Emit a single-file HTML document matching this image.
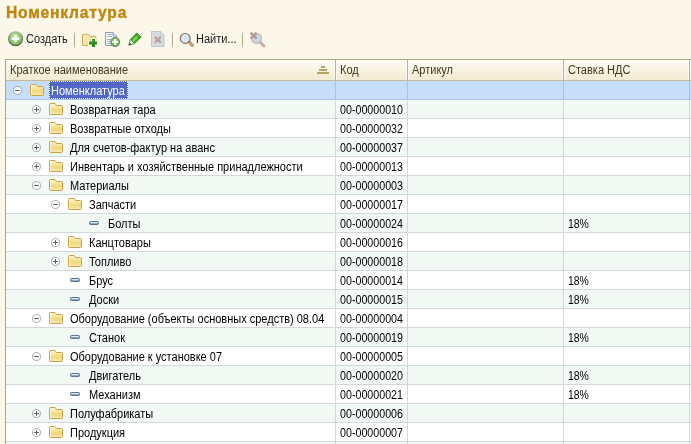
<!DOCTYPE html><html><head><meta charset="utf-8"><style>
*{margin:0;padding:0;box-sizing:border-box}
html,body{width:691px;height:444px;overflow:hidden;background:#fbf8ea;font-family:"Liberation Sans",sans-serif;font-size:11px;color:#000}
.a{position:absolute;white-space:nowrap}
.title{left:6px;top:3px;font-size:17px;font-weight:bold;color:#bf850e;-webkit-text-stroke:0.35px #bf850e;line-height:20px;letter-spacing:0.85px;transform:scaleX(0.92);transform-origin:0 0}
.tb{top:33px;line-height:12px;color:#1a1a1a;font-size:12px;transform:scaleX(0.9167);transform-origin:0 0}
.sep{position:absolute;top:30px;width:2px;height:20px;border-left:1px solid #aaa382;border-right:1px solid #fff;-webkit-mask:linear-gradient(transparent,#000 30%,#000 70%,transparent)}
.grid{left:5px;top:59px;width:700px;height:400px;background:#fff;border-left:1px solid #aca684;border-top:1px solid #aca684}
.hdr{left:6px;top:60px;width:700px;height:21px;background:linear-gradient(#fdfcf5,#f3ead0);border-bottom:1px solid #c4ba94}
.ht{top:64px;line-height:12px;color:#43381f;font-size:12px;transform:scaleX(0.9167);transform-origin:0 0}
.hcol{position:absolute;top:60px;width:1px;height:20px;background:#bbb18c;box-shadow:-1px 0 rgba(255,255,255,.6),1px 0 rgba(255,255,255,.6)}
.row{position:absolute;left:6px;width:700px;height:19px;border-bottom:1px solid #d0d7dd}
.odd{background:#f2f8f4}
.even{background:#fff}
.selr{background:#c6defa;border-bottom-color:#a9c5ea}
.vcol{position:absolute;width:1px;top:81px;height:380px;background:#d0d7dd}
.vsel{position:absolute;width:1px;top:81px;height:18px;background:#a9c3e6}
.t{line-height:12px;font-size:12px;transform:scaleX(0.9167);transform-origin:0 0}
</style></head><body>
<svg width="0" height="0" style="position:absolute"><defs><linearGradient id="fg" x1="0" y1="0" x2="0" y2="1"><stop offset="0" stop-color="#fff8dc"/><stop offset="0.3" stop-color="#f8e7a6"/><stop offset="0.62" stop-color="#f0d877"/><stop offset="0.85" stop-color="#f5e3a2"/><stop offset="1" stop-color="#f9ecc4"/></linearGradient></defs></svg>
<div class="a title">Номенклатура</div>
<svg class="a" style="left:7px;top:30px" width="17" height="17" viewBox="0 0 17 17"><defs><radialGradient id="gc" cx="0.45" cy="0.35" r="0.7"><stop offset="0" stop-color="#c4e8aa"/><stop offset="0.7" stop-color="#7fc05a"/><stop offset="1" stop-color="#5fa03c"/></radialGradient><linearGradient id="gr" x1="0" y1="0" x2="0" y2="1"><stop offset="0" stop-color="#a9b5a5"/><stop offset="1" stop-color="#4a5548"/></linearGradient></defs><circle cx="8.6" cy="8.7" r="7" fill="url(#gc)" stroke="url(#gr)" stroke-width="1.1"/><path d="M8.6 4.8V12.6M4.7 8.7H12.5" stroke="#fff" stroke-width="2.5"/></svg>
<div class="a tb" style="left:26px">Создать</div>
<div class="sep" style="left:74px"></div>
<div class="sep" style="left:172px"></div>
<div class="sep" style="left:242px"></div>
<svg class="a" style="left:81px;top:33px" width="17" height="15" viewBox="0 0 17 15"><defs><linearGradient id="ff" x1="0" y1="0" x2="1" y2="1"><stop offset="0" stop-color="#fbf1c8"/><stop offset="1" stop-color="#eed27e"/></linearGradient></defs><path d="M1.5 2Q1.5 1.3 2.2 1.3H7.5L9 3.3H14Q14.8 3.3 14.8 4.1V12.6H2.2Q1.5 12.6 1.5 11.9Z" fill="url(#ff)" stroke="#cfa852" stroke-width="1"/><path d="M10 5H15V8H17V13H15V15H10V13H7V8H10Z" fill="#fff" opacity="0.75"/><rect x="11" y="6" width="3" height="8" fill="#2a8a1a"/><rect x="8" y="8.5" width="8" height="3" fill="#2a8a1a"/><rect x="11.5" y="6.5" width="1" height="3" fill="#5cc04a"/></svg>
<svg class="a" style="left:104px;top:31px" width="17" height="16" viewBox="0 0 17 16"><path d="M1.5 1.5H9L12.5 5V14.5H1.5Z" fill="#f5f8fb" stroke="#86a0bb"/><path d="M9 1.5V5H12.5" fill="#d9e4ef" stroke="#86a0bb"/><path d="M3 3.5H7.5M3 5.5H8M3 8.5H8M3 10.5H7M3 12.5H7" stroke="#a4b3c5"/><circle cx="11.2" cy="11" r="4.5" fill="#6fb54c" stroke="#7f8c7c" stroke-width="1.1"/><circle cx="11.2" cy="10.2" r="2.6" fill="#a4d88a" opacity="0.6"/><path d="M11.2 8V14M8.2 11H14.2" stroke="#fff" stroke-width="2.2"/></svg>
<svg class="a" style="left:128px;top:32px" width="14" height="14" viewBox="0 0 14 14"><path d="M8.9 0.9L13.1 5.1L6.6 11.6L2.4 7.4Z" fill="#4cb02c" stroke="#247a12" stroke-width="0.8"/><path d="M10.6 3.4L4 10" stroke="#9be67a" stroke-width="1.3"/><path d="M7.6 2.2L11.8 6.4" stroke="#2a7c16" stroke-width="1"/><path d="M2.4 7.4L6.6 11.6L0.8 13.2Z" fill="#f4f8ee" stroke="#247a12" stroke-width="0.7"/><path d="M1.6 10.4L3.6 12.4L0.8 13.2Z" fill="#1c5c0c"/></svg>
<svg class="a" style="left:150px;top:30px" width="16" height="18" viewBox="0 0 16 18"><path d="M1.5 1.5H10.5L14 5V16.5H1.5Z" fill="#d9dde2" stroke="#bcc6d0"/><path d="M10.5 1.5V5H14" fill="#e6eaef" stroke="#bcc6d0"/><path d="M4.8 6.8L10.8 12.8M10.8 6.8L4.8 12.8" stroke="#bf9c95" stroke-width="2.3"/></svg>
<svg class="a" style="left:178px;top:31px" width="17" height="17" viewBox="0 0 17 17"><path d="M11.3 11.3L14.3 14.3" stroke="#957459" stroke-width="3" stroke-linecap="round"/><path d="M11.3 11.3L14.3 14.3" stroke="#d6b596" stroke-width="1.4" stroke-linecap="round"/><circle cx="7.2" cy="7.4" r="4.9" fill="#dbe6f7" stroke="#8f6f58" stroke-width="1.2"/></svg>
<div class="a tb" style="left:196px">Найти...</div>
<svg class="a" style="left:248px;top:30px" width="18" height="18" viewBox="0 0 18 18"><path d="M12.2 12.2L16 16" stroke="#c2b3a8" stroke-width="3" stroke-linecap="round"/><circle cx="8.6" cy="8.5" r="4.9" fill="#c9d8e6" stroke="#c8b8aa" stroke-width="1.2"/><path d="M2.6 2.6L8.6 8.6M8.6 2.6L2.6 8.6" stroke="#b39a96" stroke-width="2.4"/></svg>
<div class="a grid"></div>
<div class="a hdr"></div>
<div class="hcol" style="left:335px"></div>
<div class="hcol" style="left:407px"></div>
<div class="hcol" style="left:563px"></div>
<div class="hcol" style="left:689px"></div>
<div class="a ht" style="left:10px">Краткое наименование</div>
<div class="a ht" style="left:340px">Код</div>
<div class="a ht" style="left:412px">Артикул</div>
<div class="a ht" style="left:568px">Ставка НДС</div>
<svg class="a" style="left:317px;top:66px" width="12" height="8" viewBox="0 0 12 8"><path d="M4 1H8M2 4H10M0 7H12" stroke="#b3a264" stroke-width="2"/></svg>
<div class="row selr" style="top:81px;height:19px"></div>
<div class="row odd" style="top:100px;height:19px"></div>
<div class="row even" style="top:119px;height:19px"></div>
<div class="row odd" style="top:138px;height:19px"></div>
<div class="row even" style="top:157px;height:19px"></div>
<div class="row odd" style="top:176px;height:19px"></div>
<div class="row even" style="top:195px;height:19px"></div>
<div class="row odd" style="top:214px;height:19px"></div>
<div class="row even" style="top:233px;height:19px"></div>
<div class="row odd" style="top:252px;height:19px"></div>
<div class="row even" style="top:271px;height:19px"></div>
<div class="row odd" style="top:290px;height:19px"></div>
<div class="row even" style="top:309px;height:19px"></div>
<div class="row odd" style="top:328px;height:19px"></div>
<div class="row even" style="top:347px;height:19px"></div>
<div class="row odd" style="top:366px;height:19px"></div>
<div class="row even" style="top:385px;height:19px"></div>
<div class="row odd" style="top:404px;height:19px"></div>
<div class="row even" style="top:423px;height:19px"></div>
<div class="row odd" style="top:442px;height:19px"></div>
<div class="vcol" style="left:335px"></div>
<div class="vsel" style="left:335px"></div>
<div class="vcol" style="left:407px"></div>
<div class="vsel" style="left:407px"></div>
<div class="vcol" style="left:563px"></div>
<div class="vsel" style="left:563px"></div>
<div class="vcol" style="left:689px"></div>
<div class="vsel" style="left:689px"></div>
<svg class="a" style="left:13px;top:86px" width="9" height="9" viewBox="0 0 9 9"><circle cx="4.5" cy="4.5" r="4" fill="#fff" stroke="rgba(70,80,95,0.42)" stroke-width="1.1"/><path d="M2.2 4.5 H6.8" stroke="#5a5a5a" stroke-width="1"/></svg>
<svg class="a" style="left:30px;top:84px" width="14" height="12" viewBox="0 0 14 12"><path d="M0.5 1.5 Q0.5 0.5 1.5 0.5 H6 L7.5 2.5 H12.5 Q13.5 2.5 13.5 3.5 V10.5 Q13.5 11.5 12.5 11.5 H1.5 Q0.5 11.5 0.5 10.5 Z" fill="url(#fg)" stroke="#c9a043" stroke-width="1"/><path d="M1.5 1.5V10.5" stroke="#fffbea" stroke-width="1" opacity="0.8"/></svg>
<div class="a" style="left:49px;top:81px;width:79px;height:18px;background:#5367c7;outline:1px dotted #fff;outline-offset:-1px"></div>
<div class="a t" style="left:51px;top:85px;color:#fff">Номенклатура</div>
<svg class="a" style="left:32px;top:105px" width="9" height="9" viewBox="0 0 9 9"><circle cx="4.5" cy="4.5" r="4" fill="#fff" stroke="rgba(70,80,95,0.42)" stroke-width="1.1"/><path d="M2.2 4.5 H6.8" stroke="#5a5a5a" stroke-width="1"/><path d="M4.5 2.2 V6.8" stroke="#5a5a5a" stroke-width="1"/></svg>
<svg class="a" style="left:49px;top:103px" width="14" height="12" viewBox="0 0 14 12"><path d="M0.5 1.5 Q0.5 0.5 1.5 0.5 H6 L7.5 2.5 H12.5 Q13.5 2.5 13.5 3.5 V10.5 Q13.5 11.5 12.5 11.5 H1.5 Q0.5 11.5 0.5 10.5 Z" fill="url(#fg)" stroke="#c9a043" stroke-width="1"/><path d="M1.5 1.5V10.5" stroke="#fffbea" stroke-width="1" opacity="0.8"/></svg>
<div class="a t" style="left:70px;top:104px">Возвратная тара</div>
<div class="a t" style="left:340px;top:104px;transform:scaleX(0.89)">00-00000010</div>
<svg class="a" style="left:32px;top:124px" width="9" height="9" viewBox="0 0 9 9"><circle cx="4.5" cy="4.5" r="4" fill="#fff" stroke="rgba(70,80,95,0.42)" stroke-width="1.1"/><path d="M2.2 4.5 H6.8" stroke="#5a5a5a" stroke-width="1"/><path d="M4.5 2.2 V6.8" stroke="#5a5a5a" stroke-width="1"/></svg>
<svg class="a" style="left:49px;top:122px" width="14" height="12" viewBox="0 0 14 12"><path d="M0.5 1.5 Q0.5 0.5 1.5 0.5 H6 L7.5 2.5 H12.5 Q13.5 2.5 13.5 3.5 V10.5 Q13.5 11.5 12.5 11.5 H1.5 Q0.5 11.5 0.5 10.5 Z" fill="url(#fg)" stroke="#c9a043" stroke-width="1"/><path d="M1.5 1.5V10.5" stroke="#fffbea" stroke-width="1" opacity="0.8"/></svg>
<div class="a t" style="left:70px;top:123px">Возвратные отходы</div>
<div class="a t" style="left:340px;top:123px;transform:scaleX(0.89)">00-00000032</div>
<svg class="a" style="left:32px;top:143px" width="9" height="9" viewBox="0 0 9 9"><circle cx="4.5" cy="4.5" r="4" fill="#fff" stroke="rgba(70,80,95,0.42)" stroke-width="1.1"/><path d="M2.2 4.5 H6.8" stroke="#5a5a5a" stroke-width="1"/><path d="M4.5 2.2 V6.8" stroke="#5a5a5a" stroke-width="1"/></svg>
<svg class="a" style="left:49px;top:141px" width="14" height="12" viewBox="0 0 14 12"><path d="M0.5 1.5 Q0.5 0.5 1.5 0.5 H6 L7.5 2.5 H12.5 Q13.5 2.5 13.5 3.5 V10.5 Q13.5 11.5 12.5 11.5 H1.5 Q0.5 11.5 0.5 10.5 Z" fill="url(#fg)" stroke="#c9a043" stroke-width="1"/><path d="M1.5 1.5V10.5" stroke="#fffbea" stroke-width="1" opacity="0.8"/></svg>
<div class="a t" style="left:70px;top:142px">Для счетов-фактур на аванс</div>
<div class="a t" style="left:340px;top:142px;transform:scaleX(0.89)">00-00000037</div>
<svg class="a" style="left:32px;top:162px" width="9" height="9" viewBox="0 0 9 9"><circle cx="4.5" cy="4.5" r="4" fill="#fff" stroke="rgba(70,80,95,0.42)" stroke-width="1.1"/><path d="M2.2 4.5 H6.8" stroke="#5a5a5a" stroke-width="1"/><path d="M4.5 2.2 V6.8" stroke="#5a5a5a" stroke-width="1"/></svg>
<svg class="a" style="left:49px;top:160px" width="14" height="12" viewBox="0 0 14 12"><path d="M0.5 1.5 Q0.5 0.5 1.5 0.5 H6 L7.5 2.5 H12.5 Q13.5 2.5 13.5 3.5 V10.5 Q13.5 11.5 12.5 11.5 H1.5 Q0.5 11.5 0.5 10.5 Z" fill="url(#fg)" stroke="#c9a043" stroke-width="1"/><path d="M1.5 1.5V10.5" stroke="#fffbea" stroke-width="1" opacity="0.8"/></svg>
<div class="a t" style="left:70px;top:161px">Инвентарь и хозяйственные принадлежности</div>
<div class="a t" style="left:340px;top:161px;transform:scaleX(0.89)">00-00000013</div>
<svg class="a" style="left:32px;top:181px" width="9" height="9" viewBox="0 0 9 9"><circle cx="4.5" cy="4.5" r="4" fill="#fff" stroke="rgba(70,80,95,0.42)" stroke-width="1.1"/><path d="M2.2 4.5 H6.8" stroke="#5a5a5a" stroke-width="1"/></svg>
<svg class="a" style="left:49px;top:179px" width="14" height="12" viewBox="0 0 14 12"><path d="M0.5 1.5 Q0.5 0.5 1.5 0.5 H6 L7.5 2.5 H12.5 Q13.5 2.5 13.5 3.5 V10.5 Q13.5 11.5 12.5 11.5 H1.5 Q0.5 11.5 0.5 10.5 Z" fill="url(#fg)" stroke="#c9a043" stroke-width="1"/><path d="M1.5 1.5V10.5" stroke="#fffbea" stroke-width="1" opacity="0.8"/></svg>
<div class="a t" style="left:70px;top:180px">Материалы</div>
<div class="a t" style="left:340px;top:180px;transform:scaleX(0.89)">00-00000003</div>
<svg class="a" style="left:51px;top:200px" width="9" height="9" viewBox="0 0 9 9"><circle cx="4.5" cy="4.5" r="4" fill="#fff" stroke="rgba(70,80,95,0.42)" stroke-width="1.1"/><path d="M2.2 4.5 H6.8" stroke="#5a5a5a" stroke-width="1"/></svg>
<svg class="a" style="left:68px;top:198px" width="14" height="12" viewBox="0 0 14 12"><path d="M0.5 1.5 Q0.5 0.5 1.5 0.5 H6 L7.5 2.5 H12.5 Q13.5 2.5 13.5 3.5 V10.5 Q13.5 11.5 12.5 11.5 H1.5 Q0.5 11.5 0.5 10.5 Z" fill="url(#fg)" stroke="#c9a043" stroke-width="1"/><path d="M1.5 1.5V10.5" stroke="#fffbea" stroke-width="1" opacity="0.8"/></svg>
<div class="a t" style="left:89px;top:199px">Запчасти</div>
<div class="a t" style="left:340px;top:199px;transform:scaleX(0.89)">00-00000017</div>
<svg class="a" style="left:89px;top:221px" width="10" height="4" viewBox="0 0 10 4"><rect x="0" y="0" width="10" height="4" rx="2" fill="#56728f"/><rect x="1" y="1" width="8" height="1.6" rx="0.8" fill="#dce8f4"/><rect x="1.5" y="2.3" width="7" height="0.7" fill="#8ea6be"/></svg>
<div class="a t" style="left:108px;top:218px">Болты</div>
<div class="a t" style="left:340px;top:218px;transform:scaleX(0.89)">00-00000024</div>
<div class="a t" style="left:568px;top:218px;transform:scaleX(0.87)">18%</div>
<svg class="a" style="left:51px;top:238px" width="9" height="9" viewBox="0 0 9 9"><circle cx="4.5" cy="4.5" r="4" fill="#fff" stroke="rgba(70,80,95,0.42)" stroke-width="1.1"/><path d="M2.2 4.5 H6.8" stroke="#5a5a5a" stroke-width="1"/><path d="M4.5 2.2 V6.8" stroke="#5a5a5a" stroke-width="1"/></svg>
<svg class="a" style="left:68px;top:236px" width="14" height="12" viewBox="0 0 14 12"><path d="M0.5 1.5 Q0.5 0.5 1.5 0.5 H6 L7.5 2.5 H12.5 Q13.5 2.5 13.5 3.5 V10.5 Q13.5 11.5 12.5 11.5 H1.5 Q0.5 11.5 0.5 10.5 Z" fill="url(#fg)" stroke="#c9a043" stroke-width="1"/><path d="M1.5 1.5V10.5" stroke="#fffbea" stroke-width="1" opacity="0.8"/></svg>
<div class="a t" style="left:89px;top:237px">Канцтовары</div>
<div class="a t" style="left:340px;top:237px;transform:scaleX(0.89)">00-00000016</div>
<svg class="a" style="left:51px;top:257px" width="9" height="9" viewBox="0 0 9 9"><circle cx="4.5" cy="4.5" r="4" fill="#fff" stroke="rgba(70,80,95,0.42)" stroke-width="1.1"/><path d="M2.2 4.5 H6.8" stroke="#5a5a5a" stroke-width="1"/><path d="M4.5 2.2 V6.8" stroke="#5a5a5a" stroke-width="1"/></svg>
<svg class="a" style="left:68px;top:255px" width="14" height="12" viewBox="0 0 14 12"><path d="M0.5 1.5 Q0.5 0.5 1.5 0.5 H6 L7.5 2.5 H12.5 Q13.5 2.5 13.5 3.5 V10.5 Q13.5 11.5 12.5 11.5 H1.5 Q0.5 11.5 0.5 10.5 Z" fill="url(#fg)" stroke="#c9a043" stroke-width="1"/><path d="M1.5 1.5V10.5" stroke="#fffbea" stroke-width="1" opacity="0.8"/></svg>
<div class="a t" style="left:89px;top:256px">Топливо</div>
<div class="a t" style="left:340px;top:256px;transform:scaleX(0.89)">00-00000018</div>
<svg class="a" style="left:70px;top:278px" width="10" height="4" viewBox="0 0 10 4"><rect x="0" y="0" width="10" height="4" rx="2" fill="#56728f"/><rect x="1" y="1" width="8" height="1.6" rx="0.8" fill="#dce8f4"/><rect x="1.5" y="2.3" width="7" height="0.7" fill="#8ea6be"/></svg>
<div class="a t" style="left:89px;top:275px">Брус</div>
<div class="a t" style="left:340px;top:275px;transform:scaleX(0.89)">00-00000014</div>
<div class="a t" style="left:568px;top:275px;transform:scaleX(0.87)">18%</div>
<svg class="a" style="left:70px;top:297px" width="10" height="4" viewBox="0 0 10 4"><rect x="0" y="0" width="10" height="4" rx="2" fill="#56728f"/><rect x="1" y="1" width="8" height="1.6" rx="0.8" fill="#dce8f4"/><rect x="1.5" y="2.3" width="7" height="0.7" fill="#8ea6be"/></svg>
<div class="a t" style="left:89px;top:294px">Доски</div>
<div class="a t" style="left:340px;top:294px;transform:scaleX(0.89)">00-00000015</div>
<div class="a t" style="left:568px;top:294px;transform:scaleX(0.87)">18%</div>
<svg class="a" style="left:32px;top:314px" width="9" height="9" viewBox="0 0 9 9"><circle cx="4.5" cy="4.5" r="4" fill="#fff" stroke="rgba(70,80,95,0.42)" stroke-width="1.1"/><path d="M2.2 4.5 H6.8" stroke="#5a5a5a" stroke-width="1"/></svg>
<svg class="a" style="left:49px;top:312px" width="14" height="12" viewBox="0 0 14 12"><path d="M0.5 1.5 Q0.5 0.5 1.5 0.5 H6 L7.5 2.5 H12.5 Q13.5 2.5 13.5 3.5 V10.5 Q13.5 11.5 12.5 11.5 H1.5 Q0.5 11.5 0.5 10.5 Z" fill="url(#fg)" stroke="#c9a043" stroke-width="1"/><path d="M1.5 1.5V10.5" stroke="#fffbea" stroke-width="1" opacity="0.8"/></svg>
<div class="a t" style="left:70px;top:313px">Оборудование (объекты основных средств) 08.04</div>
<div class="a t" style="left:340px;top:313px;transform:scaleX(0.89)">00-00000004</div>
<svg class="a" style="left:70px;top:335px" width="10" height="4" viewBox="0 0 10 4"><rect x="0" y="0" width="10" height="4" rx="2" fill="#56728f"/><rect x="1" y="1" width="8" height="1.6" rx="0.8" fill="#dce8f4"/><rect x="1.5" y="2.3" width="7" height="0.7" fill="#8ea6be"/></svg>
<div class="a t" style="left:89px;top:332px">Станок</div>
<div class="a t" style="left:340px;top:332px;transform:scaleX(0.89)">00-00000019</div>
<div class="a t" style="left:568px;top:332px;transform:scaleX(0.87)">18%</div>
<svg class="a" style="left:32px;top:352px" width="9" height="9" viewBox="0 0 9 9"><circle cx="4.5" cy="4.5" r="4" fill="#fff" stroke="rgba(70,80,95,0.42)" stroke-width="1.1"/><path d="M2.2 4.5 H6.8" stroke="#5a5a5a" stroke-width="1"/></svg>
<svg class="a" style="left:49px;top:350px" width="14" height="12" viewBox="0 0 14 12"><path d="M0.5 1.5 Q0.5 0.5 1.5 0.5 H6 L7.5 2.5 H12.5 Q13.5 2.5 13.5 3.5 V10.5 Q13.5 11.5 12.5 11.5 H1.5 Q0.5 11.5 0.5 10.5 Z" fill="url(#fg)" stroke="#c9a043" stroke-width="1"/><path d="M1.5 1.5V10.5" stroke="#fffbea" stroke-width="1" opacity="0.8"/></svg>
<div class="a t" style="left:70px;top:351px">Оборудование к установке 07</div>
<div class="a t" style="left:340px;top:351px;transform:scaleX(0.89)">00-00000005</div>
<svg class="a" style="left:70px;top:373px" width="10" height="4" viewBox="0 0 10 4"><rect x="0" y="0" width="10" height="4" rx="2" fill="#56728f"/><rect x="1" y="1" width="8" height="1.6" rx="0.8" fill="#dce8f4"/><rect x="1.5" y="2.3" width="7" height="0.7" fill="#8ea6be"/></svg>
<div class="a t" style="left:89px;top:370px">Двигатель</div>
<div class="a t" style="left:340px;top:370px;transform:scaleX(0.89)">00-00000020</div>
<div class="a t" style="left:568px;top:370px;transform:scaleX(0.87)">18%</div>
<svg class="a" style="left:70px;top:392px" width="10" height="4" viewBox="0 0 10 4"><rect x="0" y="0" width="10" height="4" rx="2" fill="#56728f"/><rect x="1" y="1" width="8" height="1.6" rx="0.8" fill="#dce8f4"/><rect x="1.5" y="2.3" width="7" height="0.7" fill="#8ea6be"/></svg>
<div class="a t" style="left:89px;top:389px">Механизм</div>
<div class="a t" style="left:340px;top:389px;transform:scaleX(0.89)">00-00000021</div>
<div class="a t" style="left:568px;top:389px;transform:scaleX(0.87)">18%</div>
<svg class="a" style="left:32px;top:409px" width="9" height="9" viewBox="0 0 9 9"><circle cx="4.5" cy="4.5" r="4" fill="#fff" stroke="rgba(70,80,95,0.42)" stroke-width="1.1"/><path d="M2.2 4.5 H6.8" stroke="#5a5a5a" stroke-width="1"/><path d="M4.5 2.2 V6.8" stroke="#5a5a5a" stroke-width="1"/></svg>
<svg class="a" style="left:49px;top:407px" width="14" height="12" viewBox="0 0 14 12"><path d="M0.5 1.5 Q0.5 0.5 1.5 0.5 H6 L7.5 2.5 H12.5 Q13.5 2.5 13.5 3.5 V10.5 Q13.5 11.5 12.5 11.5 H1.5 Q0.5 11.5 0.5 10.5 Z" fill="url(#fg)" stroke="#c9a043" stroke-width="1"/><path d="M1.5 1.5V10.5" stroke="#fffbea" stroke-width="1" opacity="0.8"/></svg>
<div class="a t" style="left:70px;top:408px">Полуфабрикаты</div>
<div class="a t" style="left:340px;top:408px;transform:scaleX(0.89)">00-00000006</div>
<svg class="a" style="left:32px;top:428px" width="9" height="9" viewBox="0 0 9 9"><circle cx="4.5" cy="4.5" r="4" fill="#fff" stroke="rgba(70,80,95,0.42)" stroke-width="1.1"/><path d="M2.2 4.5 H6.8" stroke="#5a5a5a" stroke-width="1"/><path d="M4.5 2.2 V6.8" stroke="#5a5a5a" stroke-width="1"/></svg>
<svg class="a" style="left:49px;top:426px" width="14" height="12" viewBox="0 0 14 12"><path d="M0.5 1.5 Q0.5 0.5 1.5 0.5 H6 L7.5 2.5 H12.5 Q13.5 2.5 13.5 3.5 V10.5 Q13.5 11.5 12.5 11.5 H1.5 Q0.5 11.5 0.5 10.5 Z" fill="url(#fg)" stroke="#c9a043" stroke-width="1"/><path d="M1.5 1.5V10.5" stroke="#fffbea" stroke-width="1" opacity="0.8"/></svg>
<div class="a t" style="left:70px;top:427px">Продукция</div>
<div class="a t" style="left:340px;top:427px;transform:scaleX(0.89)">00-00000007</div>
</body></html>
